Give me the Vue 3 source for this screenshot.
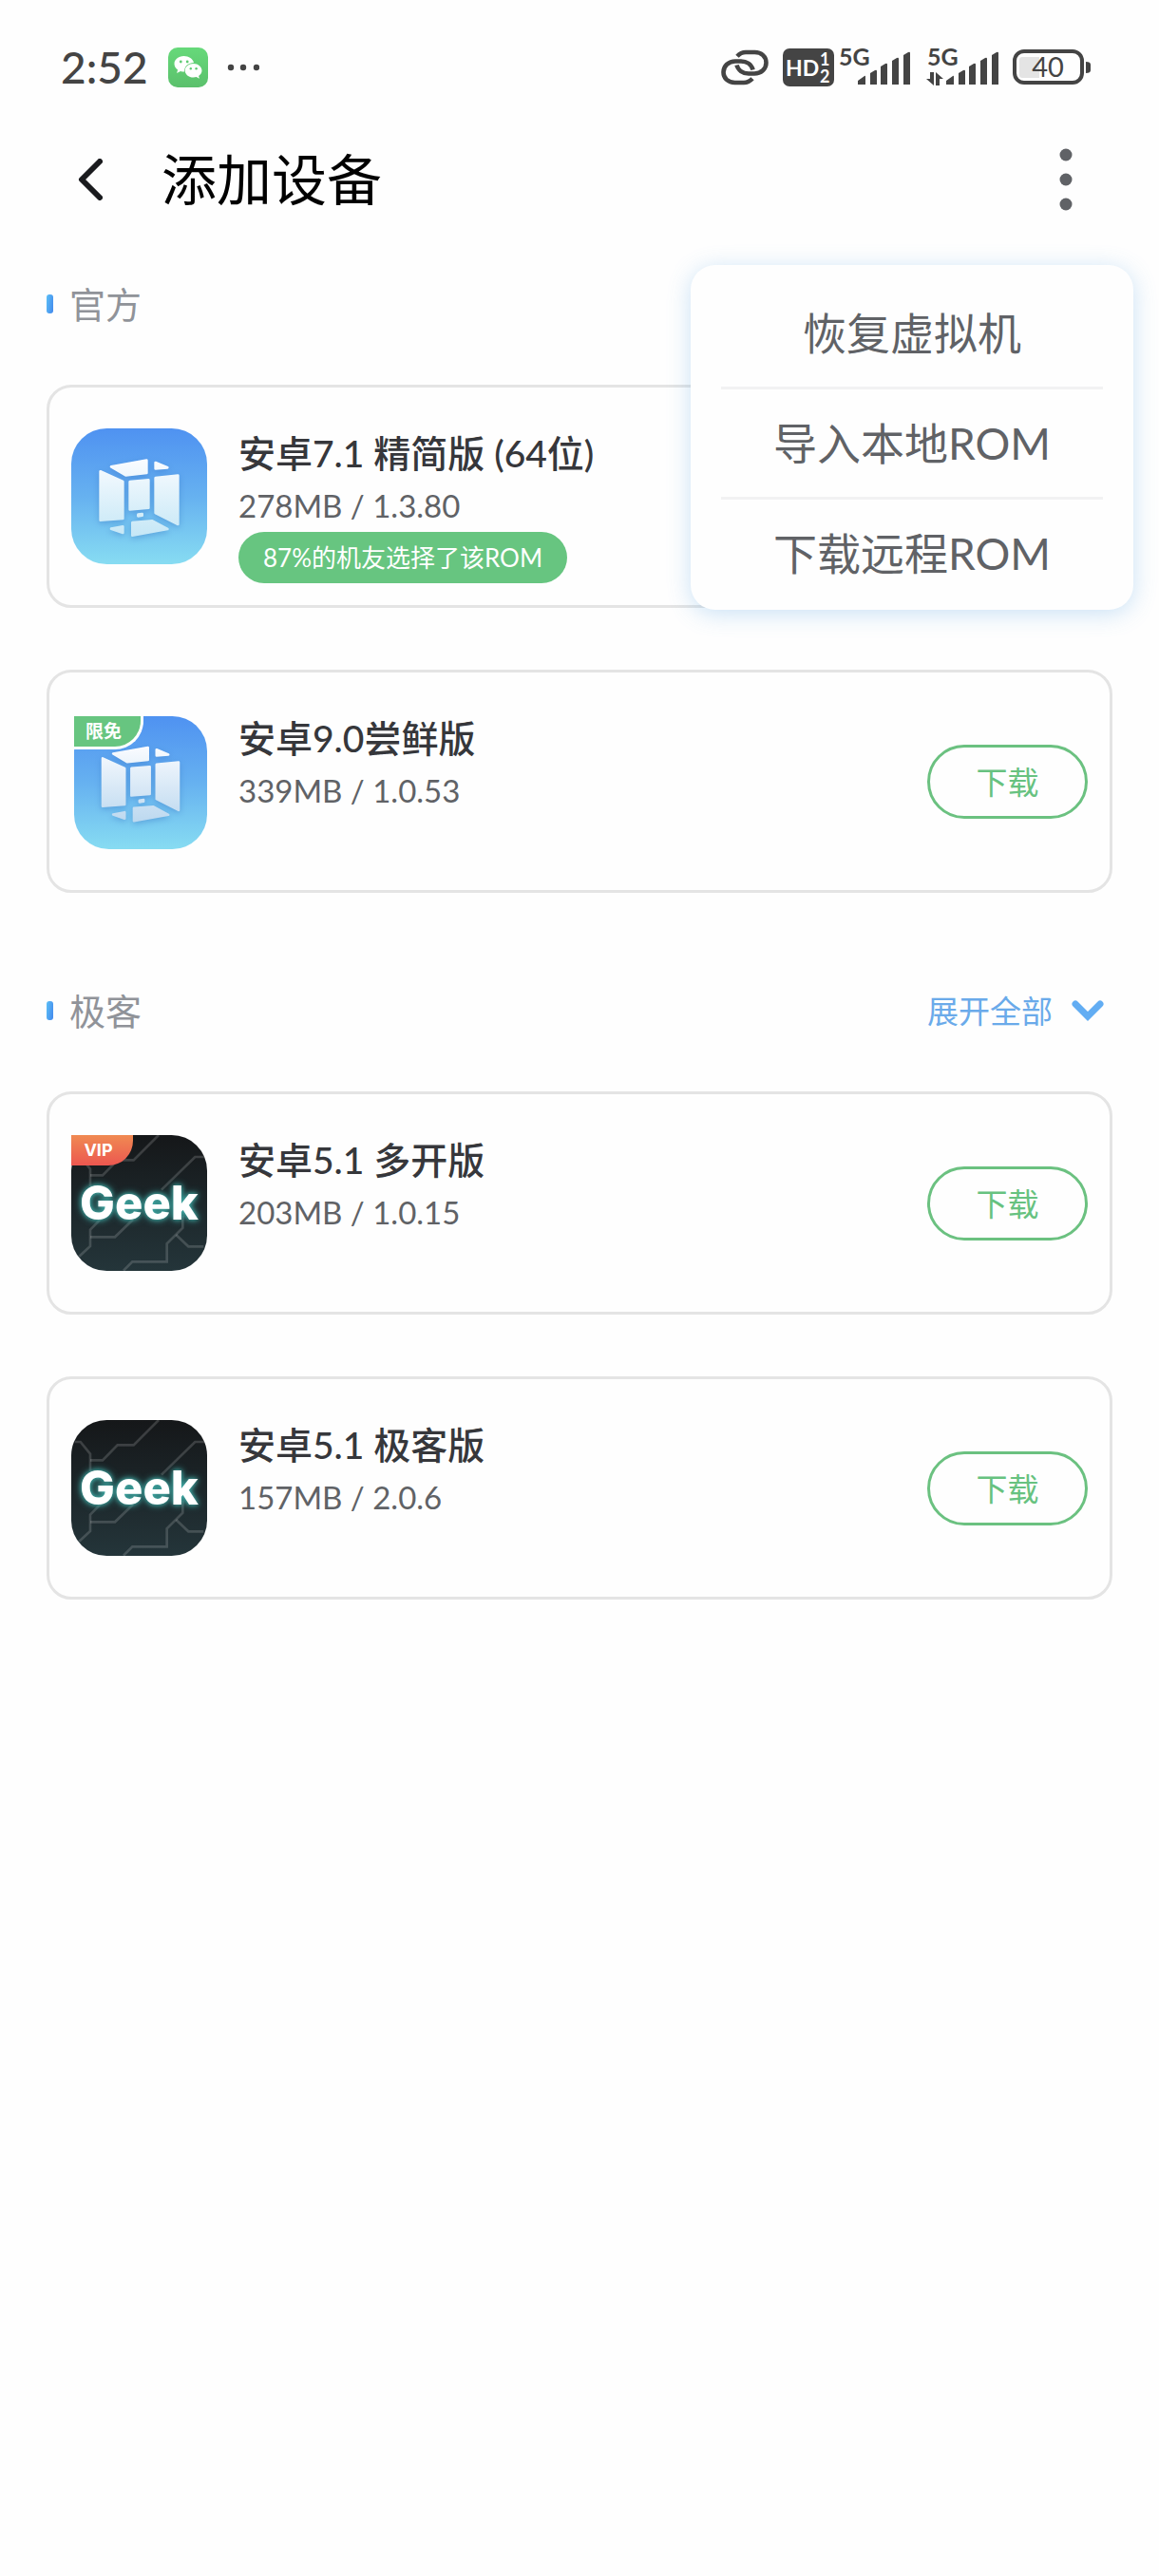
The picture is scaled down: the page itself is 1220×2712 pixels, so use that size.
<template>
  <div class="page">
    <div class="status-bar">
      <div class="status-left">
        <span class="clock">2:52</span>
        <svg class="wechat" viewBox="0 0 42 42">
          <defs>
            <linearGradient id="wechat-bg" x1="0" y1="0" x2="0" y2="1">
              <stop offset="0" stop-color="#66d97a" />
              <stop offset="1" stop-color="#5bc06c" />
            </linearGradient>
          </defs>
          <rect width="42" height="42" rx="10" fill="url(#wechat-bg)" />
          <path d="M16.500 9C10.700 9 6.500 12.700 6.500 17.300c0 2.600 1.400 4.800 3.600 6.300l-1 3.400 3.900-2c1.300.4 2.600.5 4 .5C17 19.500 21.500 16 27 16c-.9-4-5.200-7-10.500-7z" fill="#fff" />
          <path d="M26.600 17c-5 0-8.900 3.300-8.900 7.300s3.900 7.300 8.900 7.300c1.100 0 2.200-.2 3.100-.5l3.200 1.700-.8-2.800c2.100-1.400 3.400-3.400 3.400-5.700 0-4-3.900-7.300-8.900-7.300z" fill="#fff" />
          <g fill="#5fcb72">
            <circle cx="13.300" cy="15" r="1.400" />
            <circle cx="20.200" cy="15" r="1.400" />
            <circle cx="23.800" cy="22.200" r="1.200" />
            <circle cx="29.600" cy="22.200" r="1.200" />
          </g>
        </svg>
        <svg class="more-dots" viewBox="0 0 34 8" fill="#444">
          <circle cx="4" cy="4" r="3.200" />
          <circle cx="17" cy="4" r="3.200" />
          <circle cx="31" cy="4" r="3.200" />
        </svg>
      </div>

      <div class="status-right">
        <svg class="link" viewBox="0 0 50 38" fill="none" stroke="#444" stroke-width="4.600">
          <path d="M17 7.200C19.500 4.500 22 3 26 3h9.500c7 0 12 4.600 12 11 0 6.700-5.500 11.500-12.500 11.500h-6c-6 0-11-3.500-12.500-9" />
          <path d="M33 30.800C30.500 33.500 28 35 24 35h-9.500c-7 0-12-4.600-12-11 0-6.700 5.500-11.500 12.500-11.500h6c6 0 11 3.500 12.500 9" />
        </svg>
        <svg class="hd" viewBox="0 0 54 40">
          <rect width="54" height="40" rx="7" fill="#444" />
          <g class="hd-text" fill="#fff">
            <text x="3" y="29" font-size="23">HD</text>
            <text x="39" y="18" font-size="18">1</text>
            <text x="39" y="36" font-size="18">2</text>
          </g>
        </svg>
        <svg v-for="sim in sims" :key="sim.id" class="signal" viewBox="0 -10 80 60" fill="#444">
          <text class="net" x="3" y="18" font-size="25">5G</text>
          <path d="M23 38v-4l7-5q1-1 1 1v8z" />
          <path d="M36 38V26l5-3q2-1 2 1v14z" />
          <path d="M47 38V19l5-3q2-1 2 1v21z" />
          <path d="M59 38V13l5-3q2-1 2 1v27z" />
          <path d="M71 38V7l5-3q2-1 2 1v33z" />
          <path v-if="sim.active" d="M10 25v14l-8-7h4v-7zM12 39V25l8 7h-4v7z" />
        </svg>
        <svg class="battery" viewBox="0 0 84 38">
          <rect x="2" y="2" width="71" height="33" rx="10" fill="none" stroke="#444" stroke-width="4" />
          <path d="M10 8h18v22H10q-3 0-3-3V11q0-3 3-3z" fill="#e4e4e4" />
          <path d="M77 13q5 0 5 3v6q0 3-5 3z" fill="#444" />
          <text class="level" x="37" y="29" font-size="29" text-anchor="middle" fill="#444">40</text>
        </svg>
      </div>
    </div>

    <header class="header">
      <button class="back-btn" aria-label="返回">
        <svg viewBox="0 0 26 44" fill="none" stroke="#1a1b1e" stroke-width="6" stroke-linecap="round" stroke-linejoin="round">
          <path d="M23 3L4 22l19 19" />
        </svg>
      </button>
      <h1>添加设备</h1>
      <button class="menu-btn" aria-label="更多" @click="menuOpen = !menuOpen">
        <svg viewBox="0 0 14 66" fill="#606266">
          <circle cx="7" cy="7" r="6.500" />
          <circle cx="7" cy="33" r="6.500" />
          <circle cx="7" cy="59" r="6.500" />
        </svg>
      </button>
      <div v-if="menuOpen" class="menu">
        <button v-for="item in menuItems" :key="item" class="menu-item">{{ item }}</button>
      </div>
    </header>

    <section v-for="group in groups" :key="group.name" class="group">
      <div class="group-head">
        <span class="marker"></span>
        <h2>{{ group.name }}</h2>
        <button v-if="group.expandable" class="expand-btn">
          展开全部
          <svg viewBox="0 0 34 22" fill="none" stroke="#62adf3" stroke-width="7" stroke-linecap="round" stroke-linejoin="miter">
            <path d="M4 4l13 13L30 4" />
          </svg>
        </button>
      </div>

      <div class="cards">
        <article v-for="rom in group.roms" :key="rom.title" class="card">
          <div class="icon-box">
            <svg v-if="rom.icon === 'vmos'" class="vmos" :class="{ small: rom.tag }" viewBox="45 33 429 429">
              <defs>
                <linearGradient :id="'sky-' + rom.id" x1="0" y1="0" x2="0" y2="1">
                  <stop offset="0" stop-color="#4f92f1" />
                  <stop offset="0.500" stop-color="#66b1f0" />
                  <stop offset="1" stop-color="#87dcf2" />
                </linearGradient>
                <linearGradient :id="'pane-' + rom.id" gradientUnits="userSpaceOnUse" x1="0" y1="130" x2="0" y2="375">
                  <stop offset="0" stop-color="#fafcff" />
                  <stop offset="1" :stop-color="rom.paneEnd" />
                </linearGradient>
              </defs>
              <rect x="45" y="33" width="429" height="429" rx="112" :fill="`url(#sky-${rom.id})`" />
              <g class="panes" :fill="`url(#pane-${rom.id})`" :stroke="`url(#pane-${rom.id})`" stroke-width="8" stroke-linejoin="round">
                <path d="M171 154L283 134V174L217 181z" />
                <path d="M311 141L349 157L311 160z" />
                <path d="M137 169L208 201V318L137 323z" />
                <path d="M230 201L289 196V284L230 289z" />
                <path d="M311 189L382 182V336L311 300z" />
                <path d="M256 305L269 303V308L256 310z" />
                <path d="M171 350L208 343V363z" />
                <path d="M238 330L301 325L349 351L238 371z" />
              </g>
            </svg>
            <div v-else class="geek">
              <svg viewBox="45 45 429 429">
                <defs>
                  <linearGradient :id="'night-' + rom.id" x1="0" y1="0" x2="0" y2="1">
                    <stop offset="0" stop-color="#151719" />
                    <stop offset="1" stop-color="#24353a" />
                  </linearGradient>
                </defs>
                <rect x="45" y="45" width="429" height="429" rx="112" :fill="`url(#night-${rom.id})`" />
                <g fill="none" stroke="#fff" stroke-opacity="0.160" stroke-width="8">
                  <path d="M321 45L242 124H191L144 172H105" />
                  <path d="M56 114H74L105 152V204L132 230" />
                  <path d="M468 114H436L330 218" />
                  <path d="M138 310L105 344V396L70 428" />
                  <path d="M105 367H183L240 312" />
                  <path d="M397 300V338L347 388V445H238L210 473" />
                  <path d="M376 360L415 397H463" />
                </g>
              </svg>
              <span>Geek</span>
            </div>
            <span v-if="rom.tag" class="tag" :class="rom.tagType">{{ rom.tag }}</span>
          </div>
          <div class="info">
            <h3>{{ rom.title }}</h3>
            <p class="meta">{{ rom.size }} / {{ rom.version }}</p>
            <span v-if="rom.note" class="note">{{ rom.note }}</span>
          </div>
          <button v-if="rom.downloadable" class="download-btn">下载</button>
        </article>
      </div>
    </section>
  </div>
</template>

<script setup>
import { ref } from 'vue'

const menuOpen = ref(true)

const menuItems = ['恢复虚拟机', '导入本地ROM', '下载远程ROM']

const sims = [
  { id: 1, active: false },
  { id: 2, active: true },
]

const groups = ref([
  {
    name: '官方',
    expandable: false,
    roms: [
      {
        id: 'a71',
        title: '安卓7.1 精简版 (64位)',
        size: '278MB',
        version: '1.3.80',
        icon: 'vmos',
        paneEnd: '#c5e7f6',
        note: '87%的机友选择了该ROM',
        downloadable: false,
      },
      {
        id: 'a90',
        title: '安卓9.0尝鲜版',
        size: '339MB',
        version: '1.0.53',
        icon: 'vmos',
        paneEnd: '#bcd8ef',
        tag: '限免',
        tagType: 'free',
        downloadable: true,
      },
    ],
  },
  {
    name: '极客',
    expandable: true,
    roms: [
      {
        id: 'a51m',
        title: '安卓5.1 多开版',
        size: '203MB',
        version: '1.0.15',
        icon: 'geek',
        tag: 'VIP',
        tagType: 'vip',
        downloadable: true,
      },
      {
        id: 'a51g',
        title: '安卓5.1 极客版',
        size: '157MB',
        version: '2.0.6',
        icon: 'geek',
        downloadable: true,
      },
    ],
  },
])
</script>

<style>
body {
  background-color: #fefefe;
}
</style>

<style scoped>
.page {
  min-height: 100vh;
  font-family: Lato, "Noto Sans CJK SC", sans-serif;
  color: #36373b;
}

button {
  padding: 0;
  border: none;
  background: none;
  font-family: inherit;
  cursor: pointer;
}

h1, h2, h3, p {
  margin: 0;
}

svg {
  display: block;
}

.status-bar {
  display: flex;
  justify-content: space-between;
  align-items: center;
  height: 142px;
  padding: 0 70px 0 64px;
}

.status-left, .status-right {
  display: flex;
  align-items: center;
}

.clock {
  font-size: 46px;
  line-height: 56px;
  font-weight: 500;
  color: #444;
}

.wechat {
  width: 42px;
  height: 42px;
  margin-left: 21px;
}

.more-dots {
  width: 34px;
  height: 8px;
  margin-left: 20px;
}

.link {
  width: 50px;
  height: 38px;
  margin-right: 15px;
}

.hd {
  width: 54px;
  height: 40px;
  margin-right: 2px;
}

.hd-text, .net {
  font-weight: 700;
}

.signal {
  width: 80px;
  height: 60px;
  margin-right: 13px;
}

.battery {
  width: 84px;
  height: 38px;
}

.header {
  position: relative;
  display: flex;
  align-items: center;
  height: 94px;
  padding: 0 68px 0 74px;
}

.back-btn {
  padding: 0 8px;
}

.back-btn svg {
  width: 26px;
  height: 44px;
}

h1 {
  flex: 1;
  margin-left: 54px;
  font-size: 58px;
  line-height: 80px;
  font-weight: 400;
  color: #000;
}

.menu-btn {
  display: flex;
  justify-content: center;
  width: 60px;
}

.menu-btn svg {
  width: 14px;
  height: 66px;
}

.menu {
  position: absolute;
  z-index: 10;
  top: 137px;
  right: 27px;
  display: flex;
  flex-direction: column;
  box-sizing: border-box;
  width: 466px;
  padding: 15px 32px 3px;
  border-radius: 26px;
  background-color: #fefefe;
  box-shadow: 0 4px 24px rgba(80, 160, 225, 0.3);
}

.menu-item {
  height: 113px;
  font-size: 46px;
  line-height: 64px;
  color: #606266;
}

.menu-item + .menu-item {
  height: 116px;
  border-top: 3px solid #f2f2f3;
}

.group {
  padding: 54px 49px 40px;
}

.group-head {
  display: flex;
  align-items: center;
  height: 60px;
  padding-right: 9px;
}

.marker {
  width: 7px;
  height: 20px;
  border-radius: 3px;
  background: linear-gradient(100deg, #5cc0f7, #4287ec);
}

h2 {
  flex: 1;
  margin-left: 17px;
  font-size: 38px;
  line-height: 60px;
  font-weight: 400;
  color: #909399;
}

.expand-btn {
  display: flex;
  align-items: center;
  gap: 20px;
  font-size: 33px;
  line-height: 60px;
  color: #6aaaea;
}

.expand-btn svg {
  width: 34px;
  height: 22px;
}

.cards {
  display: flex;
  flex-direction: column;
  gap: 65px;
  margin-top: 55px;
}

.card {
  display: flex;
  align-items: center;
  box-sizing: border-box;
  min-height: 235px;
  padding: 0 23px;
  border: 3px solid #e4e4e4;
  border-radius: 26px;
}

.icon-box {
  position: relative;
  display: flex;
  justify-content: flex-end;
  align-items: flex-end;
  width: 143px;
  height: 143px;
}

.vmos {
  width: 143px;
  height: 143px;
}

.vmos.small {
  width: 140px;
  height: 140px;
}

.panes {
  filter: drop-shadow(0 6px 10px rgba(50, 110, 190, 0.4));
}

.geek {
  display: grid;
  place-items: center;
  width: 143px;
  height: 143px;
}

.geek svg, .geek span {
  grid-area: 1 / 1;
}

.geek svg {
  width: 143px;
  height: 143px;
}

.geek span {
  font-family: Inter, sans-serif;
  font-size: 49px;
  line-height: 60px;
  font-weight: 800;
  color: #fff;
  text-shadow: 0 0 5px #3fa9a4, 0 0 9px #3fa9a4;
}

.tag {
  position: absolute;
  top: 0;
  left: 0;
  box-sizing: border-box;
  padding-right: 8px;
  font-weight: 700;
  line-height: 32px;
  text-align: center;
  color: #fff;
}

.tag.free {
  top: 3px;
  left: 3px;
  width: 73px;
  height: 35px;
  border-right: 3px solid #fff;
  border-bottom: 3px solid #fff;
  border-bottom-right-radius: 30px;
  background-color: #67c580;
  font-size: 19px;
}

.tag.vip {
  width: 65px;
  height: 32px;
  border-bottom-right-radius: 26px;
  background: linear-gradient(#f08a52, #ec5750);
  font-family: Inter, sans-serif;
  font-size: 18px;
}

.info {
  flex: 1;
  align-self: flex-start;
  margin-top: 42px;
  padding-left: 33px;
}

h3 {
  font-size: 39px;
  line-height: 54px;
  font-weight: 500;
}

.meta {
  font-size: 33px;
  line-height: 56px;
  color: #606266;
}

.note {
  display: block;
  width: fit-content;
  padding: 0 26px;
  border-radius: 27px;
  background-color: #67c580;
  font-size: 26px;
  line-height: 54px;
  color: #fff;
}

.download-btn {
  box-sizing: border-box;
  width: 169px;
  height: 78px;
  border: 3px solid #6bc180;
  border-radius: 39px;
  font-size: 33px;
  line-height: 48px;
  color: #67c280;
}
</style>
